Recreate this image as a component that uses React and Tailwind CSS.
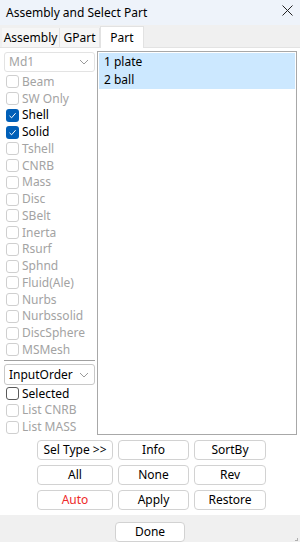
import React from "react"

const types = [
  ["Beam", false, false],
  ["SW Only", false, false],
  ["Shell", true, true],
  ["Solid", true, true],
  ["Tshell", false, false],
  ["CNRB", false, false],
  ["Mass", false, false],
  ["Disc", false, false],
  ["SBelt", false, false],
  ["Inerta", false, false],
  ["Rsurf", false, false],
  ["Sphnd", false, false],
  ["Fluid(Ale)", false, false],
  ["Nurbs", false, false],
  ["Nurbssolid", false, false],
  ["DiscSphere", false, false],
  ["MSMesh", false, false],
]

function Check({ label, checked, enabled }) {
  return (
    <div className="flex items-center h-[16.75px] pl-[2px] gap-[3px]">
      {checked ? (
        <span className="w-[13px] h-[13px] rounded-[3px] bg-[#005fb8] flex items-center justify-center">
          <svg width="9" height="9" viewBox="0 0 9 9" fill="none">
            <path d="M1.5 4.8 L3.6 6.8 L7.6 2.2" stroke="white" strokeWidth="1" />
          </svg>
        </span>
      ) : (
        <span
          className={
            "w-[13px] h-[13px] rounded-[3px] border bg-white " +
            (enabled ? "border-[#5a5a5a]" : "border-[#cfcfcf]")
          }
        />
      )}
      <span className={enabled ? "text-black" : "text-[#a3a3a3]"}>{label}</span>
    </div>
  )
}

function Chevron() {
  return (
    <svg width="10" height="6" viewBox="0 0 10 6" fill="none">
      <path d="M1 1 L5 5 L9 1" stroke="#9a9a9a" strokeWidth="1" />
    </svg>
  )
}

function Btn({ children, w, red }) {
  return (
    <button
      className={
        "h-[20px] bg-white border border-[#d2d2d2] rounded-[4px] flex items-center justify-center " +
        w +
        (red ? " text-[#ee2a2a]" : " text-black")
      }
    >
      {children}
    </button>
  )
}

export default function App() {
  return (
    <div className="w-[300px] h-[542px] flex flex-col overflow-hidden bg-white text-[12px] leading-none font-['Noto_Sans',sans-serif]">
      <div className="h-[25px] bg-[#eef3fa] flex items-center justify-between pl-[6px] pr-[6px]">
        <span className="text-black">Assembly and Select Part</span>
        <svg width="11" height="11" viewBox="0 0 11 11" fill="none" className="mr-[1px] mb-[4px]">
          <path d="M0.5 0.5 L10.5 10.5 M10.5 0.5 L0.5 10.5" stroke="#222" strokeWidth="1" />
        </svg>
      </div>

      <div className="h-[23px] bg-[#f0f0f0] flex items-end pl-[2px] border-b border-[#e3e3e3]">
        <div className="h-[19px] w-[58px] flex items-center justify-center bg-[#f6f6f6] border-r border-[#e2e2e2] text-black">
          Assembly
        </div>
        <div className="h-[19px] w-[40px] flex items-center justify-center bg-[#f6f6f6] border-r border-[#e2e2e2] text-black">
          GPart
        </div>
        <div className="h-[22px] w-[44px] flex items-center justify-center bg-white border-x border-t border-[#e2e2e2] -mb-px text-black">
          Part
        </div>
      </div>

      <div className="flex-1 flex flex-col bg-white">
        <div className="flex">
          <div className="w-[91px] ml-[4px] mt-[4px] flex flex-col">
            <div className="h-[20px] border border-[#e3e3e3] rounded-[3px] flex items-center justify-between pl-[4px] pr-[5px] text-[#a3a3a3]">
              <span>Md1</span>
              <Chevron />
            </div>
            <div className="mt-[1.5px]">
              {types.map(([l, c, e]) => (
                <Check key={l} label={l} checked={c} enabled={e} />
              ))}
            </div>
            <div className="mt-[2px] h-[2px] border-t border-[#a0a0a0] border-b-[#ffffff]" />
            <div className="mt-[2px] h-[21px] border border-[#c8c8c8] rounded-[3px] flex items-center justify-between pl-[4px] pr-[5px] text-black">
              <span>InputOrder</span>
              <Chevron />
            </div>
            <div>
              <Check label="Selected" checked={false} enabled={true} />
              <Check label="List CNRB" checked={false} enabled={false} />
              <Check label="List MASS" checked={false} enabled={false} />
            </div>
          </div>
          <div className="ml-[2px] mt-[3px] w-[200px] h-[384px] border border-[#a8a8a8] p-[1px]">
            <div className="h-[18px] bg-[#cce8ff] flex items-center pl-[5px] text-black">1 plate</div>
            <div className="h-[18px] bg-[#cce8ff] flex items-center pl-[5px] text-black">2 ball</div>
          </div>
        </div>

        <div className="mt-[4px] flex flex-col gap-[5px] pl-[37px]">
          <div className="flex gap-[5px]">
            <Btn w="w-[76px]">Sel Type &gt;&gt;</Btn>
            <Btn w="w-[71px]">Info</Btn>
            <Btn w="w-[72px]">SortBy</Btn>
          </div>
          <div className="flex gap-[5px]">
            <Btn w="w-[76px]">All</Btn>
            <Btn w="w-[71px]">None</Btn>
            <Btn w="w-[72px]">Rev</Btn>
          </div>
          <div className="flex gap-[5px]">
            <Btn w="w-[76px]" red>Auto</Btn>
            <Btn w="w-[71px]">Apply</Btn>
            <Btn w="w-[72px]">Restore</Btn>
          </div>
        </div>
      </div>

      <div className="h-[27px] bg-[#f0f0f0] flex justify-center pt-[7px] relative">
        <Btn w="w-[70px]">Done</Btn>
        <span className="absolute right-[2px] bottom-[1px] w-[3px] h-[3px] border-r border-b border-[#b0b0b0]" />
      </div>
    </div>
  )
}
